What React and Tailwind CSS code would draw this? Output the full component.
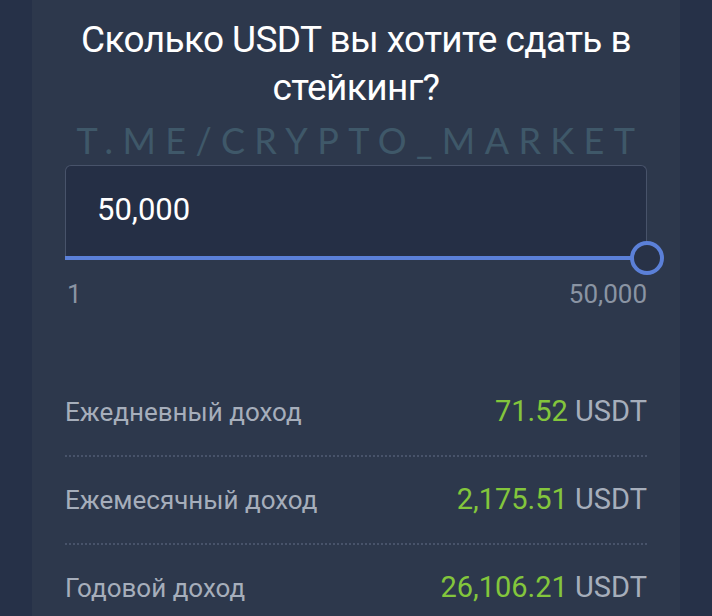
import React from "react";

const rows = [
  { label: "Ежедневный доход", value: "71.52" },
  { label: "Ежемесячный доход", value: "2,175.51" },
  { label: "Годовой доход", value: "26,106.21" },
];

export default function App() {
  return (
    <div
      className="w-[712px] h-[616px] overflow-hidden bg-[#263148] flex justify-center"
      style={{ fontFamily: "Roboto, 'Liberation Sans', sans-serif" }}
    >
      <div className="w-[648px] h-full bg-[#2d384c] px-[33px] flex flex-col">
        {/* Title */}
        <h1 className="mt-[16px] text-center text-white text-[37px] leading-[48px] tracking-[-0.6px]">
          Сколько USDT вы хотите сдать в стейкинг?
        </h1>

        {/* Watermark */}
        <div
          className="mt-[11px] text-center text-[#3f5869] text-[36px] leading-[34px] tracking-[9.4px] pl-[9px] whitespace-nowrap"
          style={{ fontFamily: "Lato, 'Open Sans', sans-serif" }}
        >
          T.ME/CRYPTO_MARKET
        </div>

        {/* Input + slider */}
        <div className="relative mt-[8px]">
          <div className="h-[91px] rounded-t-[6px] border border-b-0 border-[#48536a] bg-[#252f45] flex items-center pl-[31px] pb-[2px]">
            <span className="text-white text-[31px]">50,000</span>
          </div>
          <div className="h-[4px] bg-[#5b80d8]" />
          <div className="absolute right-[-17px] top-[76px] w-[34px] h-[34px] rounded-full border-[4px] border-[#5b80d8] bg-[#283247]" />
        </div>

        <div className="mt-[20px] flex justify-between text-[26px] leading-[28px] text-[#8a94a3] pl-[2px]">
          <span>1</span>
          <span>50,000</span>
        </div>

        {/* Income rows */}
        <div className="mt-[61px] flex flex-col">
          {rows.map((r, i) => (
            <div key={r.label}>
              {i > 0 && (
                <div className="border-t-2 border-dotted border-[#48536a]" />
              )}
              <div className="h-[86px] flex items-center justify-between text-[26px]">
                <span className="text-[#a6aebb]">{r.label}</span>
                <span className="text-[29px]">
                  <span className="text-[#83c63c]">{r.value}</span>
                  <span className="text-[#a6aebb]"> USDT</span>
                </span>
              </div>
            </div>
          ))}
        </div>
      </div>
    </div>
  );
}
